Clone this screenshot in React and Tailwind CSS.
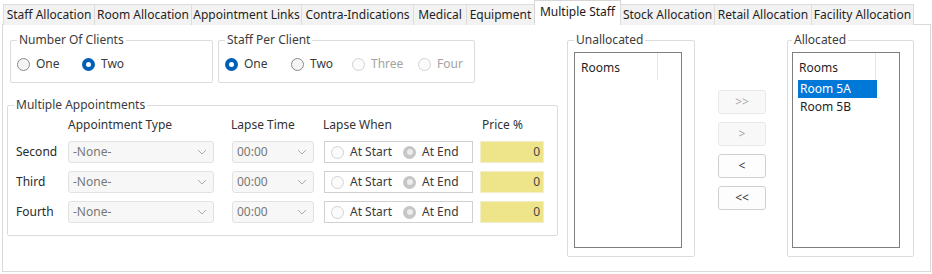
import React from 'react';

const tabs = [
  { label: 'Staff Allocation', w: 'w-[92px]' },
  { label: 'Room Allocation', w: 'w-[98px]' },
  { label: 'Appointment Links', w: 'w-[111px]' },
  { label: 'Contra-Indications', w: 'w-[113px]' },
  { label: 'Medical', w: 'w-[54px]' },
  { label: 'Equipment', w: 'w-[69px]' },
  { label: 'Multiple Staff', w: 'w-[87px]', active: true },
  { label: 'Stock Allocation', w: 'w-[95px]' },
  { label: 'Retail Allocation', w: 'w-[98px]' },
  { label: 'Facility Allocation', w: 'w-[103px]' },
];

function Radio({ state = 'off' }) {
  if (state === 'on') {
    return (
      <span className="w-[13px] h-[13px] rounded-full bg-[#005fb8] flex items-center justify-center shrink-0">
        <span className="w-[5px] h-[5px] rounded-full bg-white" />
      </span>
    );
  }
  if (state === 'disOn') {
    return (
      <span className="w-[13px] h-[13px] rounded-full bg-[#c6c6c6] flex items-center justify-center shrink-0">
        <span className="w-[6px] h-[6px] rounded-full bg-[#ececec]" />
      </span>
    );
  }
  if (state === 'dis') {
    return <span className="w-[13px] h-[13px] rounded-full border border-[#d2d2d2] bg-[#fbfbfb] shrink-0" />;
  }
  return <span className="w-[13px] h-[13px] rounded-full border border-[#8a8a8a] bg-[#f4f4f4] shrink-0" />;
}

function Option({ state, label, w, muted }) {
  return (
    <div className={`flex items-center gap-[6px] ${w}`}>
      <Radio state={state} />
      <span className={muted ? 'text-[#a3a3a3]' : 'text-[#3a3a3a]'}>{label}</span>
    </div>
  );
}

function Group({ title, className, children }) {
  return (
    <fieldset className={`border border-[#dcdcdc] rounded-[2px] px-[6px] ${className}`}>
      <legend className="px-[2px] text-[#3c3c3c] leading-[16px]">{title}</legend>
      {children}
    </fieldset>
  );
}

function Chevron() {
  return (
    <svg width="10" height="6" viewBox="0 0 10 6" className="shrink-0">
      <path d="M1 1l4 4 4-4" fill="none" stroke="#ababab" strokeWidth="1" />
    </svg>
  );
}

function Combo({ value, w }) {
  return (
    <div className={`${w} h-[22px] bg-[#f7f7f7] border border-[#e2e2e2] rounded-[3px] flex items-center justify-between pl-[4px] pr-[6px] text-[#777]`}>
      <span>{value}</span>
      <Chevron />
    </div>
  );
}

function ApptRow({ label }) {
  return (
    <div className="flex items-center h-[22px]">
      <div className="w-[54px] pl-[2px] text-[#2a2a2a]">{label}</div>
      <Combo value="-None-" w="w-[146px]" />
      <div className="ml-[18px]">
        <Combo value="00:00" w="w-[82px]" />
      </div>
      <div className="ml-[10px] w-[149px] h-[22px] bg-white border border-[#d0d0d0] flex items-center pl-[6px]">
        <Option state="dis" label="At Start" w="w-[72px]" />
        <Option state="disOn" label="At End" w="w-[66px]" />
      </div>
      <div className="ml-[7px] w-[64px] h-[22px] bg-[#eee58b] border border-[#f2eec8] flex items-center justify-end pr-[3px] text-[#444]">
        0
      </div>
    </div>
  );
}

function ListBox({ items = [], selected }) {
  return (
    <div className="w-[108px] h-[196px] border border-[#7f7f7f] bg-white">
      <div className="flex h-[27px]">
        <div className="w-[83px] pl-[6px] pt-[2px] flex items-center text-[#1f1f1f] border-r border-[#e6e6e6]">Rooms</div>
      </div>
      <div className="pl-[5px]">
        {items.map((it) => (
          <div
            key={it}
            className={`w-[79px] h-[18px] pl-[2px] flex items-center ${it === selected ? 'bg-[#0078d7] text-white' : 'text-[#1f1f1f]'}`}
          >
            {it}
          </div>
        ))}
      </div>
    </div>
  );
}

function MoveButton({ label, disabled }) {
  return (
    <div
      className={`w-[48px] h-[24px] rounded-[3px] border flex items-center justify-center ${
        disabled ? 'bg-[#f8f8f8] border-[#e8e8e8] text-[#a8a8a8]' : 'bg-[#fdfdfd] border-[#d0d0d0] text-[#333]'
      }`}
    >
      {label}
    </div>
  );
}

export default function App() {
  return (
    <div className="w-[932px] h-[274px] bg-white overflow-hidden font-['Noto_Sans',sans-serif] text-[12px] leading-[16px] text-[#1f1f1f]">
      {/* tab strip */}
      <div className="flex items-end h-[25px] pl-[3px] relative z-10">
        {tabs.map((t) =>
          t.active ? (
            <div
              key={t.label}
              className={`${t.w} h-[25px] -ml-px bg-white border border-b-0 border-[#d6d6d6] flex items-center justify-center pb-[3px] text-[#1a1a1a]`}
            >
              {t.label}
            </div>
          ) : (
            <div
              key={t.label}
              className={`${t.w} h-[21px] -ml-px bg-[#f2f2f2] border border-b-0 border-[#dcdcdc] flex items-center justify-center text-[#1f1f1f] first:ml-0`}
            >
              {t.label}
            </div>
          )
        )}
      </div>

      {/* panel */}
      <div className="ml-[2px] -mt-px w-[929px] h-[248px] border border-[#d9d9d9] flex">
        {/* left column */}
        <div className="ml-[4px] w-[551px] flex flex-col">
          <div className="flex mt-[7px]">
            <Group title="Number Of Clients" className="ml-[3px] w-[203px] h-[51px]">
              <div className="flex items-center mt-[8px]">
                <Option state="off" label="One" w="w-[65px]" />
                <Option state="on" label="Two" w="w-[60px]" />
              </div>
            </Group>
            <Group title="Staff Per Client" className="ml-[5px] w-[253px] h-[51px]">
              <div className="flex items-center mt-[8px]">
                <Option state="on" label="One" w="w-[66px]" />
                <Option state="off" label="Two" w="w-[61px]" />
                <Option state="dis" label="Three" w="w-[66px]" muted />
                <Option state="dis" label="Four" w="w-[50px]" muted />
              </div>
            </Group>
          </div>

          <Group title="Multiple Appointments" className="mt-[14px] w-[551px] h-[139px]">
            <div className="flex mt-[4px] text-[#333]">
              <div className="w-[54px]" />
              <div className="w-[163px]">Appointment Type</div>
              <div className="w-[92px]">Lapse Time</div>
              <div className="w-[159px]">Lapse When</div>
              <div>Price %</div>
            </div>
            <div className="flex flex-col gap-[8px] mt-[8px]">
              <ApptRow label="Second" />
              <ApptRow label="Third" />
              <ApptRow label="Fourth" />
            </div>
          </Group>
        </div>

        {/* right area */}
        <div className="flex items-start mt-[7px]">
          <Group title="Unallocated" className="ml-[9px] w-[128px] h-[225px]">
            <div className="mt-[4px]">
              <ListBox />
            </div>
          </Group>

          <div className="ml-[23px] mt-[58px] flex flex-col gap-[8px]">
            <MoveButton label=">>" disabled />
            <MoveButton label=">" disabled />
            <MoveButton label="<" />
            <MoveButton label="<<" />
          </div>

          <Group title="Allocated" className="ml-[21px] w-[127px] h-[225px] !px-[4px]">
            <div className="mt-[4px]">
              <ListBox items={['Room 5A', 'Room 5B']} selected="Room 5A" />
            </div>
          </Group>
        </div>
      </div>
    </div>
  );
}
